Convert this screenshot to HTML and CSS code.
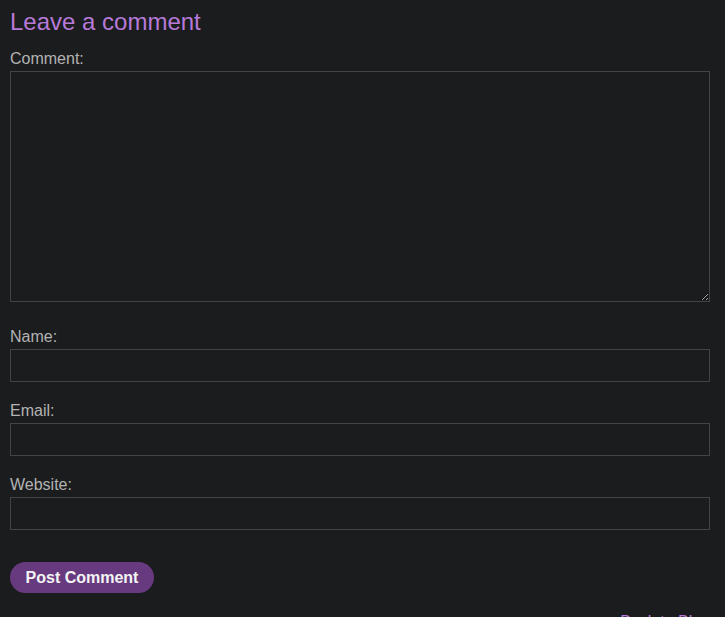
FILE: index.html
```html
<!DOCTYPE html>
<html>
<head>
<meta charset="utf-8">
<link rel="stylesheet" href="styles.css">
</head>
<body>
<section class="comment-form">
  <h2 class="title">Leave a comment</h2>
  <form class="form">
    <label class="label" for="c">Comment:</label>
    <textarea id="c" class="textarea"></textarea>
    <label class="label label-gap-big" for="n">Name:</label>
    <input id="n" class="input" type="text">
    <label class="label label-gap" for="e">Email:</label>
    <input id="e" class="input" type="text">
    <label class="label label-gap" for="w">Website:</label>
    <input id="w" class="input" type="text">
    <div class="actions"><button class="button" type="button">Post Comment</button></div>
  </form>
  <div class="back"><a class="back-link" href="#">Back to Blog</a></div>
</section>
</body>
</html>
```
FILE: styles.css
```css
* { box-sizing: border-box; }
html, body {
  margin: 0;
  background: #1b1c1e;
}
body {
  font-family: "Liberation Sans", Arial, sans-serif;
  color: #b3b3b3;
  overflow: hidden;
}
.comment-form {
  width: 700px;
  margin: 0 0 0 10px;
  padding-top: 8px;
}
.title {
  margin: 0 0 14px;
  font-size: 24px;
  font-weight: normal;
  line-height: 28px;
  color: #b77ad8;
}
.form {
  display: flex;
  flex-direction: column;
  align-items: stretch;
}
.label {
  display: block;
  font-size: 16px;
  line-height: 18px;
  margin-bottom: 3px;
  color: #b3b3b3;
}
.label-gap-big { margin-top: 26px; }
.label-gap { margin-top: 20px; }
.textarea, .input {
  width: 700px;
  background: #1b1c1e;
  border: 1px solid #434343;
  color: #ccc;
  font-family: inherit;
  font-size: 16px;
  margin: 0;
}
.textarea {
  height: 231px;
  resize: vertical;
}
.input {
  height: 33px;
}
.actions {
  margin-top: 32px;
  display: flex;
}
.button {
  width: 144px;
  height: 31px;
  border: none;
  border-radius: 16px;
  background: #673a7f;
  color: #f4f4f4;
  font-family: inherit;
  font-size: 16px;
  font-weight: bold;
  padding: 0;
  cursor: pointer;
}
.back {
  margin-top: 20px;
  text-align: right;
  font-size: 16px;
  line-height: 18px;
}
.back-link {
  color: #b77ad8;
  text-decoration: none;
}
```
